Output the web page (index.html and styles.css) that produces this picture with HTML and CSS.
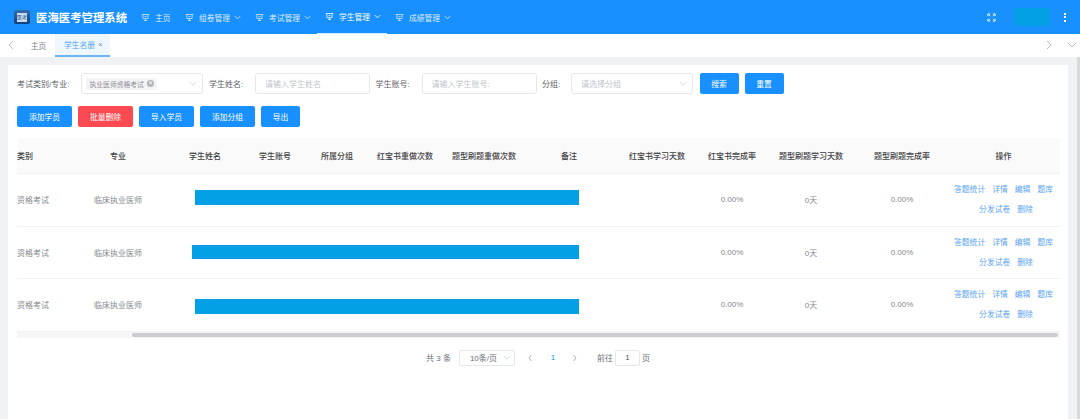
FILE: index.html
```html
<!DOCTYPE html>
<html lang="zh-CN">
<head>
    <meta charset="UTF-8">
    <title>学生名册</title>
    <link rel="stylesheet" href="styles.css">
</head>
<body>

    <!-- 顶部导航 -->
    <header class="topbar">
        <div class="logo"><span class="logo-mark">医考</span></div>
        <div class="brand">医海医考管理系统</div>
        <nav class="menu">
            <a class="menu-item menu-home"><svg class="menu-icon" viewBox="0 0 12 12"><path d="M1 2h10M2.500 2v5.500h7V2M4.500 4.800h3M6 7.500v2.500M4 10h4"/></svg>主页</a>
            <a class="menu-item"><svg class="menu-icon" viewBox="0 0 12 12"><path d="M1 2h10M2.500 2v5.500h7V2M4.500 4.800h3M6 7.500v2.500M4 10h4"/></svg>组卷管理<svg class="menu-arrow" viewBox="0 0 8 8"><path d="M1 2.500l3 3 3-3"/></svg></a>
            <a class="menu-item"><svg class="menu-icon" viewBox="0 0 12 12"><path d="M1 2h10M2.500 2v5.500h7V2M4.500 4.800h3M6 7.500v2.500M4 10h4"/></svg>考试管理<svg class="menu-arrow" viewBox="0 0 8 8"><path d="M1 2.500l3 3 3-3"/></svg></a>
            <a class="menu-item active"><svg class="menu-icon" viewBox="0 0 12 12"><path d="M1 2h10M2.500 2v5.500h7V2M4.500 4.800h3M6 7.500v2.500M4 10h4"/></svg>学生管理<svg class="menu-arrow" viewBox="0 0 8 8"><path d="M1 2.500l3 3 3-3"/></svg></a>
            <a class="menu-item"><svg class="menu-icon" viewBox="0 0 12 12"><path d="M1 2h10M2.500 2v5.500h7V2M4.500 4.800h3M6 7.500v2.500M4 10h4"/></svg>成绩管理<svg class="menu-arrow" viewBox="0 0 8 8"><path d="M1 2.500l3 3 3-3"/></svg></a>
        </nav>
        <div class="top-right">
            <svg class="full-icon" viewBox="0 0 10 10"><path d="M1 3.500V1h2.500M6.500 1H9v2.500M9 6.500V9H6.500M3.500 9H1V6.500M1.500 1.500l2 2M8.500 1.500l-2 2M8.500 8.500l-2-2M1.500 8.500l2-2"/></svg>
            <div class="user-box"></div>
            <div class="more-dots"><i></i><i></i><i></i></div>
        </div>
    </header>

    <!-- 标签栏 -->
    <div class="tabbar">
        <svg class="tab-arrow" viewBox="0 0 8 10"><path d="M6 1L2 5l4 4"/></svg>
        <a class="tab tab-home">主页</a>
        <a class="tab tab-on">学生名册<span class="tab-close">×</span></a>
        <div class="tab-space"></div>
        <svg class="tab-arrow tab-next" viewBox="0 0 8 10"><path d="M2 1l4 4-4 4"/></svg>
        <svg class="tab-arrow tab-down" viewBox="0 0 10 8"><path d="M1 2l4 4 4-4"/></svg>
    </div>

    <div class="content">
        <main class="card">
            <!-- 搜索条件 -->
            <div class="search-row">
                <label class="field-label label-type">考试类别/专业:</label>
                <div class="input select-box">
                    <span class="chip">执业医师资格考试<span class="chip-x">×</span></span>
                    <svg class="select-arrow" viewBox="0 0 10 8"><path d="M1 2l4 4 4-4"/></svg>
                </div>
                <label class="field-label label-name">学生姓名:</label>
                <div class="input input-text">请输入学生姓名</div>
                <label class="field-label label-name">学生账号:</label>
                <div class="input input-text">请输入学生账号:</div>
                <label class="field-label label-group">分组:</label>
                <div class="input select-box select-group">请选择分组
                    <svg class="select-arrow" viewBox="0 0 10 8"><path d="M1 2l4 4 4-4"/></svg>
                </div>
                <button class="btn btn-search">搜索</button>
                <button class="btn btn-search">重置</button>
            </div>

            <!-- 操作按钮 -->
            <div class="action-row">
                <button class="btn btn-wide">添加学员</button>
                <button class="btn btn-wide btn-red">批量删除</button>
                <button class="btn btn-wide">导入学员</button>
                <button class="btn btn-wide">添加分组</button>
                <button class="btn btn-out">导出</button>
            </div>

            <!-- 学生列表 -->
            <div class="table-wrap">
                <div class="row head">
                    <div class="c-type">类别</div>
                    <div>专业</div>
                    <div>学生姓名</div>
                    <div>学生账号</div>
                    <div>所属分组</div>
                    <div>红宝书重做次数</div>
                    <div>题型刷题重做次数</div>
                    <div>备注</div>
                    <div>红宝书学习天数</div>
                    <div>红宝书完成率</div>
                    <div>题型刷题学习天数</div>
                    <div>题型刷题完成率</div>
                    <div>操作</div>
                </div>

                <div class="row body">
                    <div class="c-type">资格考试</div>
                    <div class="c-major">临床执业医师</div>
                    <div class="mask mask-1"></div>
                    <div class="c-rate">0.00%</div>
                    <div class="c-days2">0天</div>
                    <div class="c-rate2">0.00%</div>
                    <div class="c-op ops">
                        <a>答题统计</a><a>详情</a><a>编辑</a><a>题库</a><a>分发试卷</a><a>删除</a>
                    </div>
                </div>
                <div class="row body">
                    <div class="c-type">资格考试</div>
                    <div class="c-major">临床执业医师</div>
                    <div class="mask mask-2"></div>
                    <div class="c-rate">0.00%</div>
                    <div class="c-days2">0天</div>
                    <div class="c-rate2">0.00%</div>
                    <div class="c-op ops">
                        <a>答题统计</a><a>详情</a><a>编辑</a><a>题库</a><a>分发试卷</a><a>删除</a>
                    </div>
                </div>
                <div class="row body">
                    <div class="c-type">资格考试</div>
                    <div class="c-major">临床执业医师</div>
                    <div class="mask mask-3"></div>
                    <div class="c-rate">0.00%</div>
                    <div class="c-days2">0天</div>
                    <div class="c-rate2">0.00%</div>
                    <div class="c-op ops">
                        <a>答题统计</a><a>详情</a><a>编辑</a><a>题库</a><a>分发试卷</a><a>删除</a>
                    </div>
                </div>

                <div class="scroll-track"><div class="scroll-thumb"></div></div>
            </div>

            <!-- 分页 -->
            <div class="pager">
                <span>共 3 条</span>
                <div class="page-size">10条/页<svg class="select-arrow" viewBox="0 0 10 8"><path d="M1 2l4 4 4-4"/></svg></div>
                <svg class="page-arrow page-prev" viewBox="0 0 8 10"><path d="M5.500 2L3 5l2.500 3"/></svg>
                <span class="page-now">1</span>
                <svg class="page-arrow page-next" viewBox="0 0 8 10"><path d="M2.500 2L5 5 2.500 8"/></svg>
                <span class="page-go">前往</span>
                <div class="page-input">1</div>
                <span>页</span>
            </div>
        </main>
        <div class="page-scroll"></div>
    </div>

</body>
</html>
```

FILE: styles.css
```css
*
{
    box-sizing: border-box;
}

html, body
{
    margin: 0; height: 100%; overflow: hidden;
}

body
{
    font-family: "Liberation Sans", "Noto Sans CJK SC", sans-serif;
    font-size: 8px; color: #606266; background-color: #ffffff;
}

/* 顶部导航 */
.topbar
{
    height: 34px; background-color: #1890ff; color: #ffffff;
    display: flex; align-items: center; padding-left: 14px;
}

.logo
{
    width: 16px; height: 14px; border-radius: 2px;
    background: linear-gradient(#2f6fb0, #123f78);
    display: flex; align-items: center; justify-content: center;
}

.logo-mark
{
    width: 10px; height: 9px; background-color: #c9dcf0; color: #17508f;
    font-size: 5px; line-height: 9px; text-align: center; overflow: hidden;
}

.brand
{
    margin-left: 6px; width: 92px; font-size: 11.400px; font-weight: bold; white-space: nowrap;
}

.menu
{
    display: flex; height: 34px; margin-left: 5px;
}

.menu-item
{
    display: flex; align-items: center; height: 34px; padding-left: 7.500px;
    width: 70px; font-size: 7.750px; color: #d8ebff; white-space: nowrap;
}

.menu-home { width: 44px; }

.menu-item.active
{
    color: #ffffff; border-bottom: 1px solid #d8ebff;
}

.menu-icon
{
    width: 9px; height: 9px; margin-right: 5.500px; flex-shrink: 0;
    fill: none; stroke: currentColor; stroke-width: 1;
}

.menu-arrow
{
    width: 7px; height: 7px; margin-left: 3.500px; flex-shrink: 0;
    fill: none; stroke: currentColor; stroke-width: 1;
}

.top-right
{
    margin-left: auto; display: flex; align-items: center;
}

.full-icon
{
    width: 9px; height: 9px; fill: none; stroke: #ffffff; stroke-width: 1;
}

.user-box
{
    width: 36px; height: 18px; margin-left: 18px; background-color: #03a0e6;
}

.more-dots
{
    display: flex; flex-direction: column; gap: 1.500px; margin: 0 14px 0 14px;
}

.more-dots i
{
    width: 2px; height: 2px; background-color: #ffffff; display: block;
}

/* 标签栏 */
.tabbar
{
    height: 23px; display: flex; align-items: stretch; background-color: #ffffff;
}

.tab-arrow
{
    width: 8px; height: 10px; margin: 6px 0 0 7px; flex-shrink: 0;
    fill: none; stroke: #a6a9ad; stroke-width: 0.800;
}

.tab
{
    display: flex; align-items: center; font-size: 7.750px; color: #808488;
}

.tab-home { width: 33px; margin-left: 7px; justify-content: center; }

.tab-on
{
    width: 54.500px; padding-left: 9px; color: #4ba3f5; background-color: #eff7fe;
    border-bottom: 2px solid #6db5f4;
}

.tab-close { margin-left: 3px; font-size: 8px; color: #7a8a9a; }

.tab-space { flex: 1; }

.tab-next { margin: 6px 0 0 0; }

.tab-down { width: 10px; margin: 6px 3px 0 14px; }

/* 内容区 */
.content
{
    height: 362px; background-color: #f0f2f5; padding: 8px 0 0 8px; display: flex;
}

.card
{
    width: 1060px; height: 354px; background-color: #ffffff; padding: 8px 0 0 9px;
}

.search-row
{
    display: flex; align-items: center; height: 21px;
}

.field-label
{
    font-size: 8px; color: #606266; white-space: nowrap;
}

.label-type { width: 64px; }
.label-name { width: 46px; }
.label-group { width: 29px; }

.input
{
    height: 21px; border: 1px solid #e4e7ed; border-radius: 3px; background-color: #ffffff;
    display: flex; align-items: center; font-size: 8px; color: #c0c4cc; flex-shrink: 0;
}

.select-box { width: 122px; padding-left: 4px; margin-right: 6px; }

.input-text { width: 115px; padding-left: 9px; margin-right: 5.500px; }

.select-group { padding-left: 9px; margin-right: 6.500px; }

.chip
{
    height: 12px; padding: 0 3px 0 3.500px; background-color: #f4f4f5; border-radius: 2px;
    display: flex; align-items: center; font-size: 6.800px; color: #909399; white-space: nowrap;
}

.chip-x
{
    width: 6.500px; height: 6.500px; margin-left: 3.500px; border-radius: 50%;
    background-color: #b4b6ba; color: #ffffff; font-size: 7px; line-height: 6.500px; text-align: center;
}

.select-arrow
{
    width: 8px; height: 7px; margin-left: auto; margin-right: 5px; flex-shrink: 0;
    fill: none; stroke: #c0c4cc; stroke-width: 0.800;
}

.btn
{
    height: 21px; border: 0; border-radius: 2px; padding: 0; background-color: #1890ff;
    color: #ffffff; font-family: inherit; font-size: 7.750px; flex-shrink: 0;
}

.btn-search { width: 39px; margin-right: 6px; }

.action-row
{
    display: flex; gap: 6px; margin-top: 12px;
}

.btn-wide { width: 55px; }
.btn-red { background-color: #fb4a52; }
.btn-out { width: 39px; }

/* 学生表格 */
.table-wrap
{
    margin-top: 11px; width: 1043px;
}

.row
{
    display: grid; align-items: center;
    grid-template-columns: 50px 102px 72px 68px 56px 80px 78px 92px 84px 66px 92px 90px 1fr;
    border-bottom: 1px solid #f1f2f4;
}

.head
{
    height: 36px; background-color: #fafafa; font-weight: 500; color: #3f4144; text-align: center;
}

.head .c-type { text-align: left; }

.body
{
    height: 52.500px; color: #85888c; text-align: center; position: relative;
}

.body .c-type { text-align: left; }
.body .c-major { grid-column: 2; }
.body .c-rate { grid-column: 10; }
.body .c-days2 { grid-column: 11; }
.body .c-rate2 { grid-column: 12; }
.body .c-op { grid-column: 13; }

/* 遮挡学生信息的色块 */
.mask
{
    position: absolute; left: 178px; width: 384px; height: 14.500px;
    background-color: #03a0e6;
}

.mask-1 { top: 16px; }
.mask-2 { top: 18px; left: 175px; width: 387px; }
.mask-3 { top: 20px; }

.ops
{
    display: flex; flex-wrap: wrap; justify-content: center; gap: 5px 7px; line-height: 15px;
    color: #5ba4f2; font-size: 7.800px;
}

.ops a { white-space: nowrap; }
.ops a:nth-child(5) { margin-left: 5px; }

.scroll-track
{
    height: 6px; background-color: #f5f6f7; padding: 1px 2px 0 115px;
}

.scroll-thumb
{
    height: 4px; background-color: #c9cbce; border-radius: 2px;
}

/* 分页 */
.pager
{
    display: flex; align-items: center; margin: 12px 0 0 409px; height: 16px; color: #6c7075;
}

.page-size
{
    width: 56px; height: 16px; margin-left: 8px; padding-left: 10px;
    border: 1px solid #e4e7ed; border-radius: 2px; display: flex; align-items: center;
}

.page-size .select-arrow { margin-right: 3px; }

.page-arrow
{
    width: 8px; height: 10px; fill: none; stroke: #9a9da2; stroke-width: 0.800;
}

.page-prev { margin-left: 11px; }
.page-next { margin-left: 14px; }

.page-now { width: 8px; margin-left: 15px; color: #1890ff; text-align: center; }

.page-go { margin-left: 18px; }

.page-input
{
    width: 25px; height: 16px; margin: 0 2px; border: 1px solid #e4e7ed; border-radius: 2px;
    text-align: center; line-height: 14px; color: #4e5053;
}

.page-scroll
{
    width: 3px; margin-left: 9px; height: 362px; margin-top: -8px;
    background-color: #d8d9db;
}
```
